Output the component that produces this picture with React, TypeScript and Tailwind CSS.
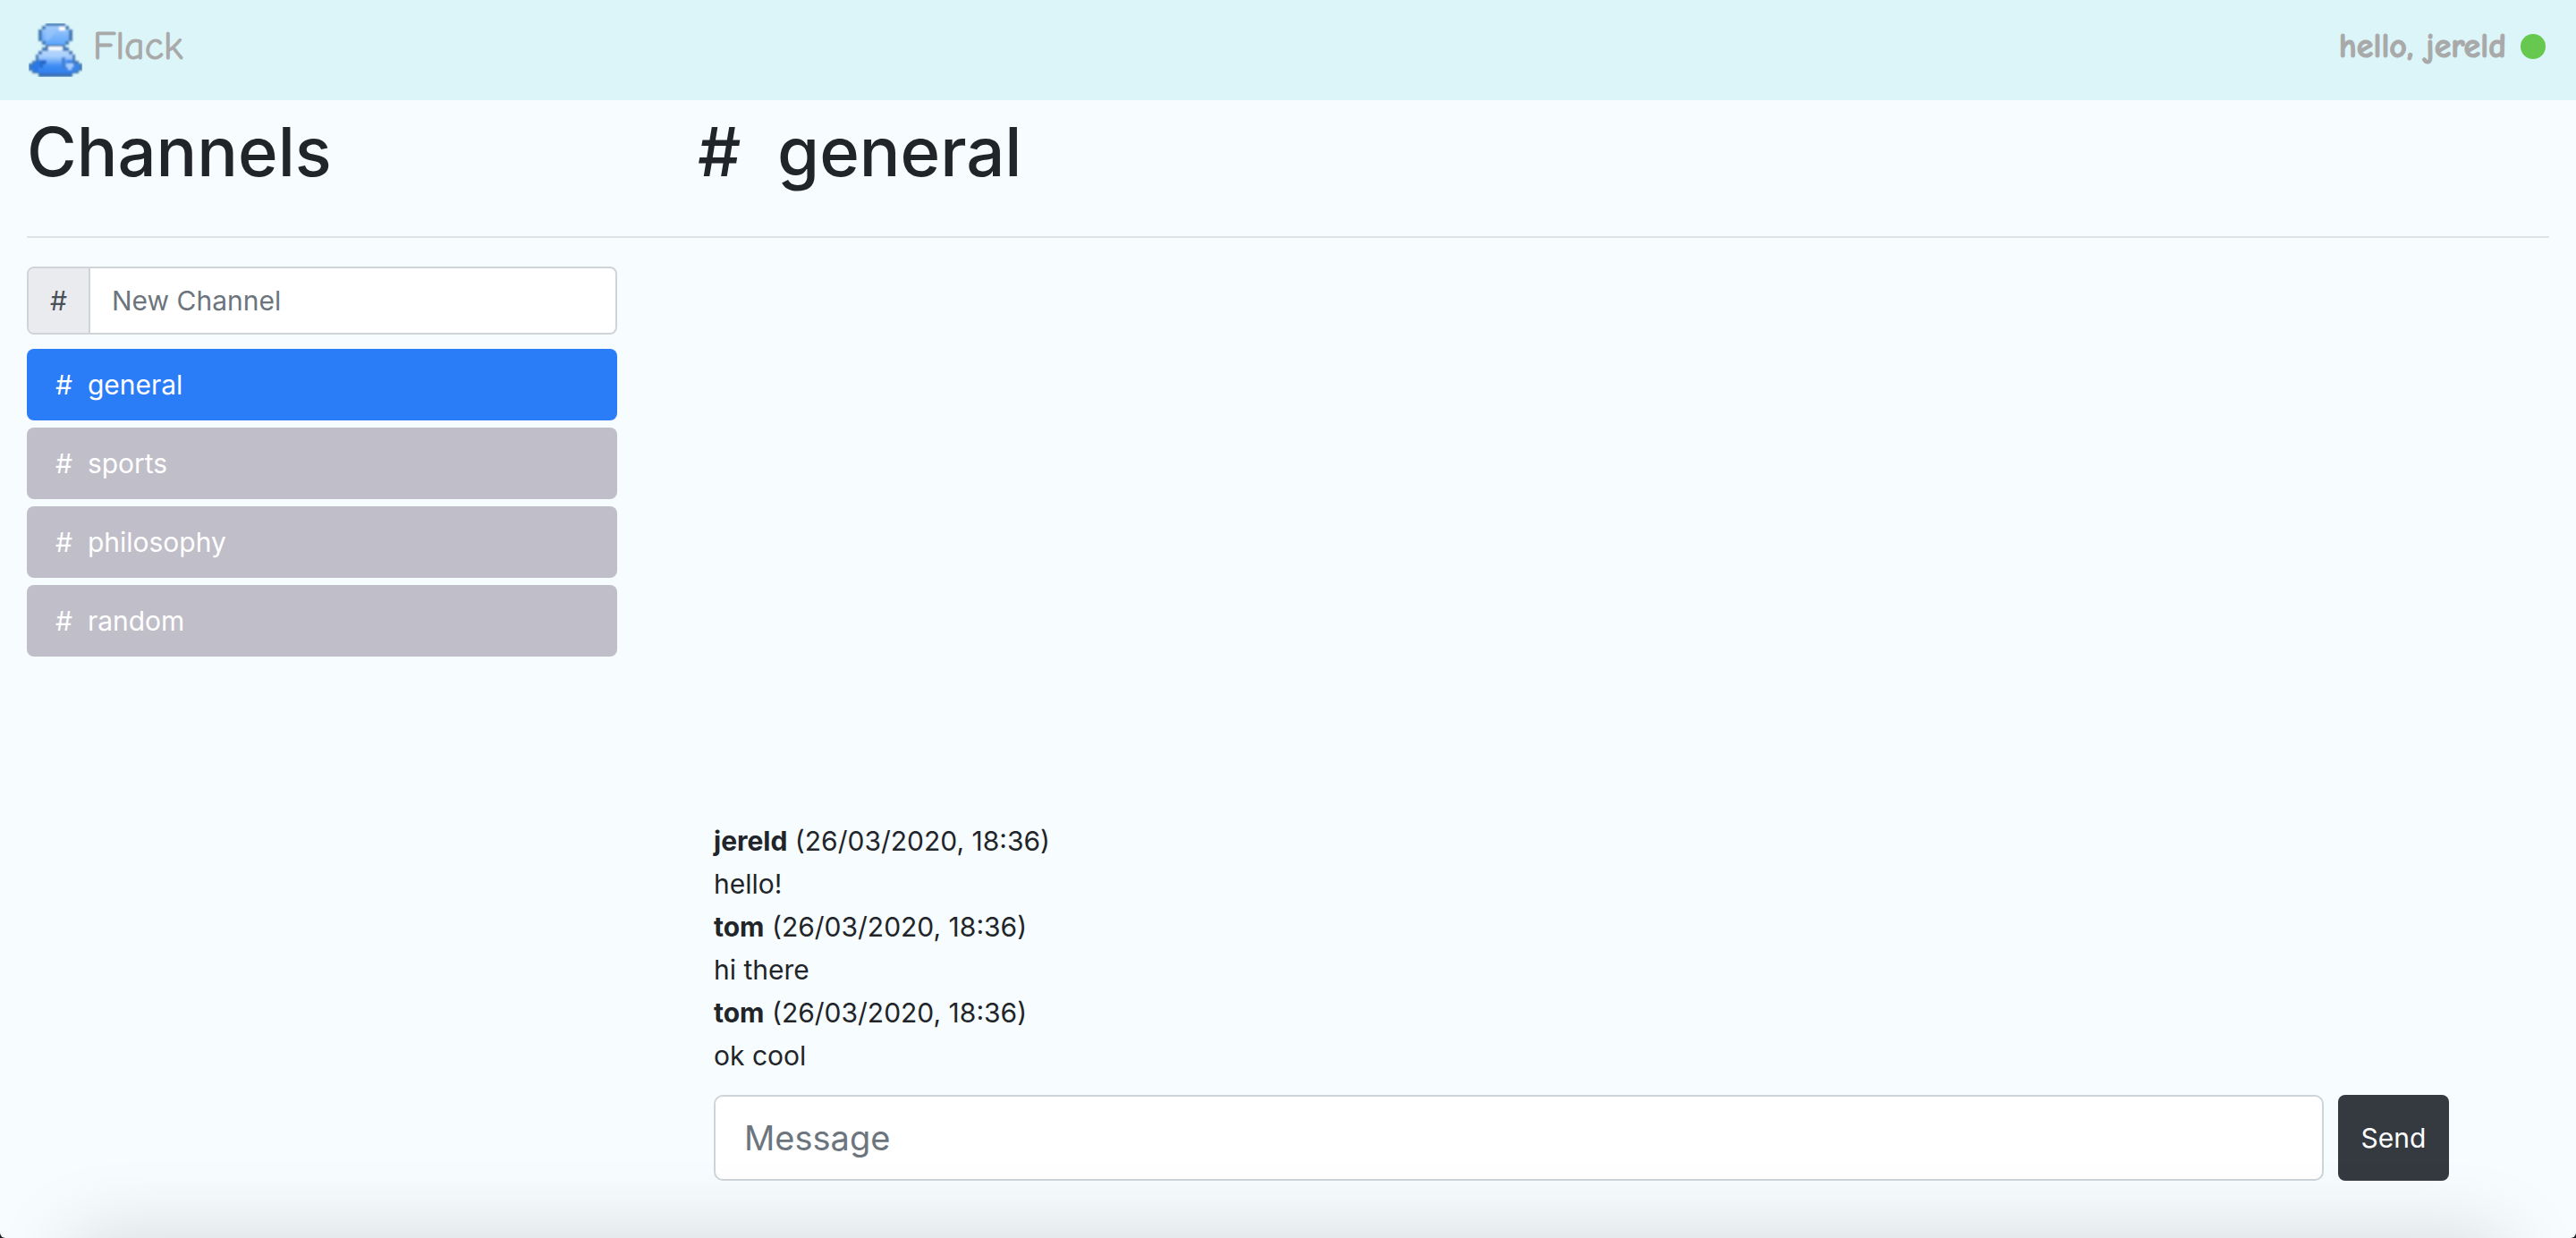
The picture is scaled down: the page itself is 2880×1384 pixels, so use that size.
import { useState } from "react";

const channels = ["general", "sports", "philosophy", "random"];

const messages = [
  { user: "jereld", time: "26/03/2020, 18:36", text: "hello!" },
  { user: "tom", time: "26/03/2020, 18:36", text: "hi there" },
  { user: "tom", time: "26/03/2020, 18:36", text: "ok cool" },
];

function PersonLogo() {
  return (
    <svg viewBox="0 0 60 60" className="size-[60px]" aria-hidden="true">
      <defs>
        <linearGradient id="head" x1="0" y1="0" x2="0" y2="1">
          <stop offset="0" stopColor="#a3ccfb" />
          <stop offset="0.45" stopColor="#84b9fa" />
          <stop offset="1" stopColor="#5ba6fb" />
        </linearGradient>
        <linearGradient id="torso" x1="0" y1="0" x2="0" y2="1">
          <stop offset="0" stopColor="#bcdafd" />
          <stop offset="0.35" stopColor="#a9cffc" />
          <stop offset="0.7" stopColor="#3f8df5" />
          <stop offset="1" stopColor="#2f7eee" />
        </linearGradient>
        <filter id="soft" x="-5%" y="-5%" width="110%" height="110%">
          <feGaussianBlur stdDeviation="0.9" />
        </filter>
      </defs>
      <g filter="url(#soft)">
        <path
          d="M19 0H41V3H45V7H49V20H45V24H41V27H45V31H49V35H52V42H56V45H60V53H56V56H49V60H11V56H4V53H0V45H4V42H8V35H11V31H15V27H19V24H15V20H11V7H15V3H19Z"
          fill="#4379b5"
        />
        <path d="M19 3H41V7H45V20H41V24H19V20H15V7H19Z" fill="url(#head)" />
        <path d="M22 27H38V31H45V35H49V56H11V35H15V31H22Z" fill="url(#torso)" />
        <path d="M11 41H20V45H15V49H11V54H6V52H3V46H7V43H11Z" fill="#2b78e6" />
        <path d="M49 41V45H54V46H57V52H54V54H49V52H42V41Z" fill="#3b85e8" />
        <path d="M37 38H41V52H37Z" fill="#3f82d8" />
        <path d="M42 45H50V49H48V52H44V49H42Z" fill="#a8d0fb" />
        <path d="M13 42H19V46H16V50H13Z" fill="#2767c4" />
        <rect x="22" y="26" width="16" height="4" fill="#f4faff" />
        <rect x="34" y="4" width="7" height="4" fill="#ffffff" />
        <path d="M19 8L31 8L23 19L19 19Z" fill="#9bc8fc" opacity="0.6" />
        <rect x="12" y="56" width="36" height="4" fill="#3a6fb5" />
      </g>
    </svg>
  );
}

export default function App() {
  const [active, setActive] = useState("general");

  return (
    <div className="min-h-screen bg-[#1c1c1e] font-['Inter',sans-serif] text-[30px] leading-[48px] text-[#212529]">
      <div className="relative flex min-h-screen flex-col overflow-hidden rounded-b-[6px] bg-[#f7fcff]">
        <header className="flex h-28 items-center justify-between bg-[#dcf5f9] pr-[34px] pl-8 font-['Comic_Sans_MS','Comic_Neue',Lato,sans-serif] text-[#a9a9a9]">
          <a href="#home" className="flex items-center gap-3 text-[44px] [-webkit-text-stroke:1px_#a9a9a9]">
            <PersonLogo />
            <span className="pb-2">Flack</span>
          </a>
          <div className="flex items-center gap-4 pb-2 text-[38px] font-bold [-webkit-text-stroke:1px_#a9a9a9]">
            <span>hello, jereld</span>
            <span className="size-7 rounded-full bg-[#67c84f]" />
          </div>
        </header>

        <div className="mx-[30px] flex h-[154px] border-b-2 border-[#dee3e6] pt-2 text-[76px] leading-[98px] font-medium">
          <h1 className="w-[750px]">Channels</h1>
          <h1>
            #&nbsp; {active}
          </h1>
        </div>

        <main className="flex flex-1 pt-8 pr-[142px] pb-16 pl-[30px]">
          <aside className="w-[660px] shrink-0">
            <form
              className="flex h-[76px] overflow-hidden rounded-lg border-2 border-[#ced4da] bg-white"
              onSubmit={(e) => e.preventDefault()}
            >
              <label
                htmlFor="new-channel"
                className="flex items-center border-r-2 border-[#ced4da] bg-[#e9ebef] px-6 text-[#495057]"
              >
                #
              </label>
              <input
                id="new-channel"
                type="text"
                placeholder="New Channel"
                className="min-w-0 flex-1 px-6 outline-none placeholder:text-[#6c757d]"
              />
            </form>
            <nav className="mt-4 flex flex-col gap-2">
              {channels.map((name) => (
                <button
                  key={name}
                  type="button"
                  onClick={() => setActive(name)}
                  className={
                    name === active
                      ? "h-20 rounded-lg bg-[#2a7cf7] px-8 text-left text-white"
                      : "h-20 rounded-lg bg-[#c0bec8] px-8 text-left text-white"
                  }
                >
                  #&nbsp; {name}
                </button>
              ))}
            </nav>
          </aside>

          <section className="ml-[108px] flex min-w-0 flex-1 flex-col justify-end">
            <ul>
              {messages.map((m, i) => (
                <li key={i}>
                  <div>
                    <strong className="font-bold">{m.user}</strong> ({m.time})
                  </div>
                  <div>{m.text}</div>
                </li>
              ))}
            </ul>
            <form className="mt-5 flex gap-4" onSubmit={(e) => e.preventDefault()}>
              <input
                type="text"
                aria-label="Message"
                placeholder="Message"
                className="h-24 min-w-0 flex-1 rounded-[10px] border-2 border-[#ced4da] bg-white px-8 text-[38px] outline-none placeholder:text-[#6c757d]"
              />
              <button type="submit" className="w-[124px] rounded-lg bg-[#343a40] text-white">
                Send
              </button>
            </form>
          </section>
        </main>

        <div className="pointer-events-none absolute inset-x-20 top-full h-24 shadow-[0_0_90px_rgba(0,0,0,0.15)]" />
      </div>
    </div>
  );
}
